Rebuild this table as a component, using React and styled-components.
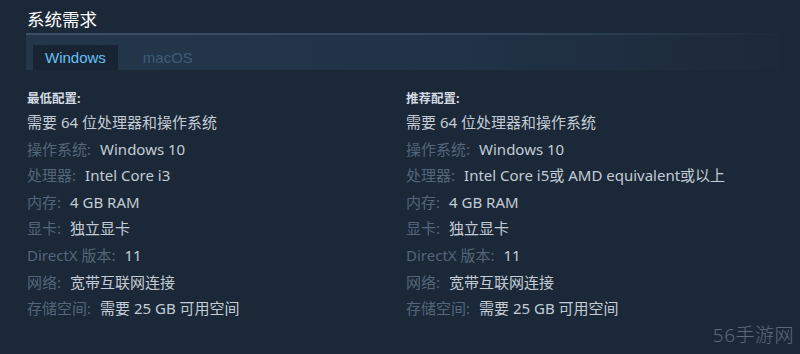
import styled, { createGlobalStyle } from 'styled-components'

const GlobalStyle = createGlobalStyle`
    html, body {
        margin: 0;
        padding: 0;
        background: #1b2838;
    }
`;

const minimo = [
    { valor: '需要 64 位处理器和操作系统' },
    { etiqueta: '操作系统', valor: 'Windows 10' },
    { etiqueta: '处理器', valor: 'Intel Core i3' },
    { etiqueta: '内存', valor: '4 GB RAM' },
    { etiqueta: '显卡', valor: '独立显卡' },
    { etiqueta: 'DirectX 版本', valor: '11' },
    { etiqueta: '网络', valor: '宽带互联网连接' },
    { etiqueta: '存储空间', valor: '需要 25 GB 可用空间' },
];

const recomendado = [
    { valor: '需要 64 位处理器和操作系统' },
    { etiqueta: '操作系统', valor: 'Windows 10' },
    { etiqueta: '处理器', valor: 'Intel Core i5或 AMD equivalent或以上' },
    { etiqueta: '内存', valor: '4 GB RAM' },
    { etiqueta: '显卡', valor: '独立显卡' },
    { etiqueta: 'DirectX 版本', valor: '11' },
    { etiqueta: '网络', valor: '宽带互联网连接' },
    { etiqueta: '存储空间', valor: '需要 25 GB 可用空间' },
];

const Columna = ({ titulo, filas }) => (
    <div>
        <Encabezado>{titulo}:</Encabezado>
        <Lista>
            {filas.map((f, i) => (
                <Fila key={i}>
                    {f.etiqueta && <Etiqueta>{f.etiqueta}:</Etiqueta>}
                    {f.valor}
                </Fila>
            ))}
        </Lista>
    </div>
);

const App = () => {
    return (
        <>
            <GlobalStyle />
            <Pagina>
                <Titulo>系统需求</Titulo>
                <BarraTabs>
                    <Tab activa>Windows</Tab>
                    <Tab>macOS</Tab>
                </BarraTabs>
                <Columnas>
                    <Columna titulo="最低配置" filas={minimo} />
                    <Columna titulo="推荐配置" filas={recomendado} />
                </Columnas>
                <MarcaAgua>56手游网</MarcaAgua>
            </Pagina>
        </>
    )
}

export default App;

const Pagina = styled.div`
    position: relative;
    width: 800px;
    height: 354px;
    box-sizing: border-box;
    padding: 7px 20px 0 27px;
    background: #1b2838;
    font-family: "Noto Sans", "Noto Sans CJK SC", sans-serif;
    overflow: hidden;
`;
const Titulo = styled.h2`
    margin: 0;
    font-size: 17.5px;
    line-height: 24px;
    font-weight: 400;
    color: #ffffff;
`;
const BarraTabs = styled.div`
    margin-top: 2px;
    margin-left: -1px;
    height: 35px;
    display: flex;
    align-items: flex-end;
    padding-left: 7px;
    border-top: 2px solid transparent;
    border-image: linear-gradient(90deg, #3a5165 0%, #30465a 65%, rgba(27,40,56,0) 100%) 1;
    background: linear-gradient(90deg, #24374a 0%, #213246 60%, #1c2939 100%);
`;
const Tab = styled.div`
    height: 25px;
    line-height: 25px;
    padding: 0 ${p => p.activa ? '12px' : '25px'};
    font-family: "Liberation Sans", Arial, sans-serif;
    font-size: 15px;
    color: ${p => p.activa ? '#66c0f4' : '#3d5d78'};
    background: ${p => p.activa ? '#182433' : 'transparent'};
`;
const Columnas = styled.div`
    display: grid;
    grid-template-columns: 379px 1fr;
    margin-top: 18px;
`;
const Encabezado = styled.div`
    font-size: 12.5px;
    line-height: 21px;
    font-weight: 700;
    color: #d4dbe2;
`;
const Lista = styled.div`
    display: flex;
    flex-direction: column;
`;
const Fila = styled.div`
    font-size: 15px;
    line-height: 26.6px;
    color: #c3ccd5;
    white-space: nowrap;
`;
const Etiqueta = styled.span`
    color: #53667a;
    margin-right: 9px;
`;
const MarcaAgua = styled.div`
    position: absolute;
    right: 6px;
    bottom: 6px;
    font-size: 19px;
    font-weight: 300;
    color: #5c6a79;
    letter-spacing: 0.5px;
`;
